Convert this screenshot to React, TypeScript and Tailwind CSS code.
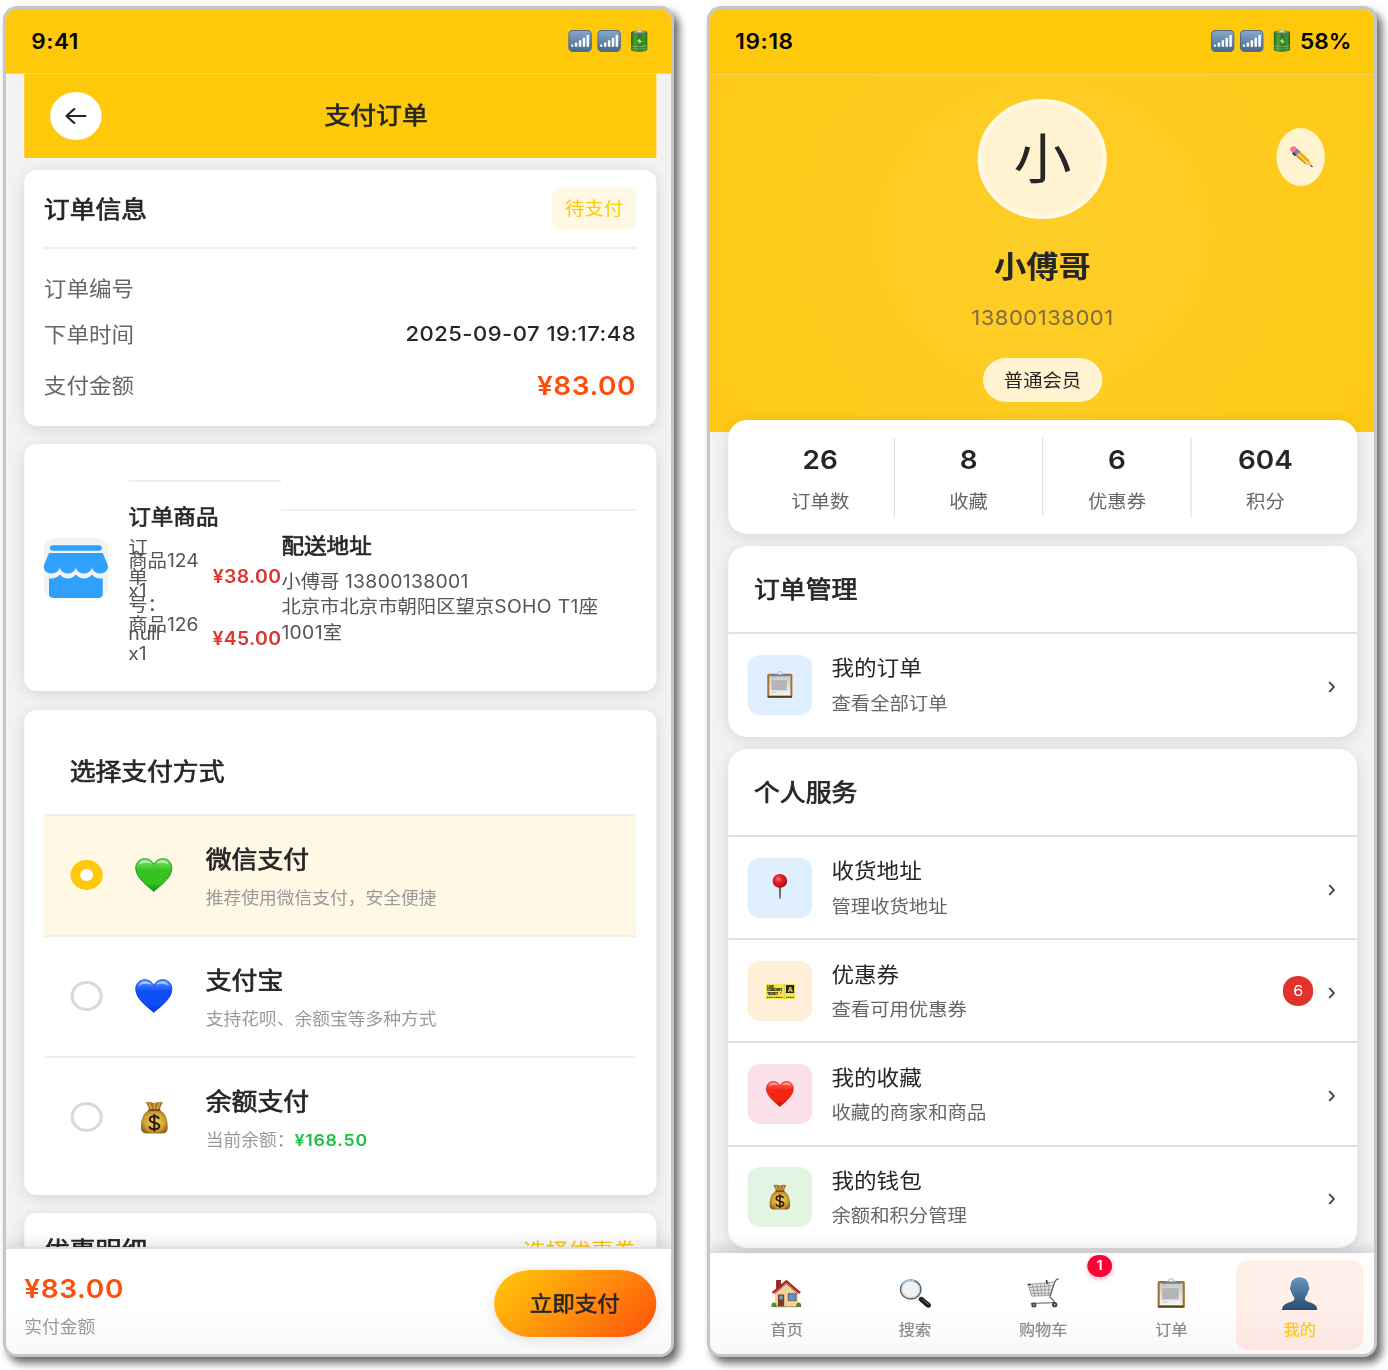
import React from "react";
import type { ReactNode } from "react";

type IconProps = { className?: string };

function Signal({ className = "" }: IconProps) {
  return (
    <svg viewBox="0 0 22 22" className={className}>
      <defs>
        <linearGradient id="sig" x1="0" y1="0" x2="0" y2="1">
          <stop offset="0" stopColor="#86a9cc" />
          <stop offset="1" stopColor="#486789" />
        </linearGradient>
      </defs>
      <rect x="0.5" y="0.5" width="21" height="21" rx="4" fill="url(#sig)" stroke="#526b86" />
      <g fill="#fff">
        <rect x="2.6" y="14.6" width="2.2" height="2.2" rx=".8" />
        <rect x="6.2" y="12.6" width="2.3" height="4.2" rx=".6" />
        <rect x="9.9" y="10.2" width="2.3" height="6.6" rx=".6" />
        <rect x="13.5" y="7.8" width="2.3" height="9" rx=".6" />
        <rect x="17.1" y="5" width="2.3" height="11.8" rx=".6" />
      </g>
    </svg>
  );
}

function Battery({ className = "" }: IconProps) {
  return (
    <svg viewBox="0 0 16 22" className={className}>
      <defs>
        <linearGradient id="bat" x1="0" x2="1" y1="0" y2="0">
          <stop offset="0" stopColor="#1c650e" />
          <stop offset=".25" stopColor="#4fa43a" />
          <stop offset=".5" stopColor="#2d7d1d" />
          <stop offset=".85" stopColor="#43932f" />
          <stop offset="1" stopColor="#1d5d11" />
        </linearGradient>
      </defs>
      <path d="M.4 2.6v16.8c0 1.4 3.4 2.3 7.6 2.3s7.6-.9 7.6-2.3V2.6z" fill="url(#bat)" />
      <ellipse cx="8" cy="2.4" rx="7.6" ry="1.9" fill="#57743f" />
      <ellipse cx="8" cy="1.9" rx="5.2" ry="1.3" fill="#8f9f96" />
      <ellipse cx="8" cy="1.2" rx="2.4" ry=".9" fill="#cfd6d4" />
      <path d="M.6 15.6c3 1.3 11.800 1.300 14.800 0" fill="none" stroke="#8cc47c" strokeWidth=".7" />
      <path d="M.6 18c3 1.300 11.800 1.300 14.800 0" fill="none" stroke="#7bb56b" strokeWidth=".6" />
      <path d="M9.200 8.200 5.800 11.300l2.300.5-.6 2.600 3.200-3.500-2.200-.5z" fill="#bfe0b4" />
    </svg>
  );
}

function Heart({ className = "", kind }: IconProps & { kind: "green" | "blue" | "red" }) {
  const c = {
    green: ["#7be36c", "#35c41f", "#0e8d12"],
    blue: ["#5a9bff", "#0f4ff5", "#0431e0"],
    red: ["#ff6a58", "#f32614", "#c40d05"],
  }[kind];
  return (
    <svg viewBox="0 0 36 34" preserveAspectRatio="none" className={className}>
      <defs>
        <linearGradient id={"h" + kind} x1="0" y1="0" x2="0" y2="1">
          <stop offset="0" stopColor={c[0]} />
          <stop offset=".35" stopColor={c[1]} />
          <stop offset=".75" stopColor={c[1]} />
          <stop offset="1" stopColor={c[2]} />
        </linearGradient>
      </defs>
      <path
        d="M18 33.500C15 30 1 21 .7 10.500.6 4.500 4.600.7 9.300.7c4 0 7.200 2.300 8.700 5.800C19.500 3 22.700.7 26.700.7c4.700 0 8.700 3.800 8.600 9.800C35 21 21 30 18 33.500z"
        fill={"url(#h" + kind + ")"}
        stroke={c[2]}
        strokeWidth=".8"
      />
      <path d="M3.500 7c.8-3 3-4.800 6-4.800 2.800 0 5.300 1.500 6.500 3.500-4-1.600-9-1.400-12.500 1.300z" fill="#fff" opacity=".5" />
      <path d="M20 5.700c1.200-2 3.700-3.500 6.500-3.500 3 0 5.200 1.800 6 4.800-3.500-2.700-8.500-2.900-12.500-1.300z" fill="#fff" opacity=".5" />
    </svg>
  );
}

function MoneyBag({ className = "" }: IconProps) {
  return (
    <svg viewBox="0 0 26 32" preserveAspectRatio="none" className={className}>
      <defs>
        <radialGradient id="bag" cx=".5" cy=".5" r=".6">
          <stop offset="0" stopColor="#f5d662" />
          <stop offset=".65" stopColor="#cf9f35" />
          <stop offset="1" stopColor="#805413" />
        </radialGradient>
      </defs>
      <path d="M5 .8c2 .9 3.500-.3 5 .4 2 .7 4 .7 6 0 1.500-.7 3 .5 5-.4L17.600 9H8.600z" fill="#a97626" />
      <path d="M8 2l2.600 6M13 2v6M18 2l-2.600 6" stroke="#e1b45b" strokeWidth="1" />
      <path d="M8.500 8.500C3.500 11 .6 16 .6 25c0 4.500 1.500 6.500 5.400 6.500h14c3.900 0 5.400-2 5.400-6.500C25.400 16 22.500 11 17.500 8.500z" fill="url(#bag)" />
      <path d="M8 8.700h10" stroke="#6d430f" strokeWidth="1.600" strokeLinecap="round" />
      <path d="M17.300 17.300c-.6-1.700-2.100-2.600-4.300-2.600-2.500 0-4.300 1.200-4.300 3.100 0 4.600 8.900 2 8.900 6.500 0 2-1.900 3.200-4.600 3.200-2.400 0-4.200-1-4.700-3M13 12.500v17" fill="none" stroke="#2a1d0c" strokeWidth="1.900" />
    </svg>
  );
}

function Clipboard({ className = "" }: IconProps) {
  return (
    <svg viewBox="0 0 27 30" preserveAspectRatio="none" className={className}>
      <defs>
        <linearGradient id="paper" x1="0" y1="0" x2="0" y2="1">
          <stop offset="0" stopColor="#c9c9c9" />
          <stop offset="1" stopColor="#f4f4f4" />
        </linearGradient>
      </defs>
      <rect x=".3" y="3" width="26.400" height="26.700" rx="1.800" fill="#a9732f" />
      <rect x=".6" y="27.800" width="25.800" height="1.800" rx=".9" fill="#5d3c15" />
      <rect x="2.500" y="5" width="22" height="22.200" fill="url(#paper)" />
      <rect x="4.800" y="10" width="16" height="11.500" fill="#b9b9b9" />
      <path d="M5 12h16M5 14.500h15.500M5 17h16M5 19.500h13M5 8h4M5 24h5" stroke="#a9a9a9" strokeWidth=".6" />
      <path d="M3.800 3.500h19.400v2.300H3.800z" fill="#76797e" />
      <path d="M9 3.800c2.500 0 1.800-3.200 4.500-3.200s2 3.200 4.500 3.200z" fill="#edf2f7" stroke="#8f9fb0" strokeWidth=".8" />
    </svg>
  );
}

function Pin({ className = "" }: IconProps) {
  return (
    <svg viewBox="0 0 14 25" preserveAspectRatio="none" className={className}>
      <defs>
        <radialGradient id="pin" cx=".4" cy=".35" r=".65">
          <stop offset="0" stopColor="#ff7a6e" />
          <stop offset=".4" stopColor="#e8202a" />
          <stop offset="1" stopColor="#ae0b16" />
        </radialGradient>
      </defs>
      <path d="M6 12h2.300l-.4 12.600h-1.500z" fill="#77665f" />
      <circle cx="7" cy="6.900" r="6.800" fill="url(#pin)" />
    </svg>
  );
}

function Ticket({ className = "" }: IconProps) {
  return (
    <svg viewBox="0 0 28 15" preserveAspectRatio="none" className={className}>
      <rect width="28" height="15" fill="#f4e64b" />
      <g fill="#26240f" className="font-['Inter'] font-black">
        <text x="1" y="3.700" fontSize="3.300" textLength="7">LIVE</text>
        <text x="1" y="7.200" fontSize="3.500" textLength="15">CONCERT</text>
        <text x="1" y="10.600" fontSize="3.500" textLength="11">TICKET</text>
      </g>
      <path d="M14 9.800l1-2.200" stroke="#55501c" strokeWidth=".7" />
      <path d="M1 13.300h6M8 13.300h8M19.500 13.300h7.500" stroke="#55501c" strokeWidth="1.200" strokeDasharray="1.200 .5" />
      <path d="M17.800 0v15" stroke="#b4a52e" strokeWidth=".7" strokeDasharray="1 1" />
      <rect x="19.400" y="1" width="7.800" height="8" fill="#24231a" />
      <text x="21" y="7.800" fontSize="6.500" fill="#f4e64b" className="font-['Inter'] font-bold">A</text>
    </svg>
  );
}

function House({ className = "" }: IconProps) {
  return (
    <svg viewBox="0 0 28 29" preserveAspectRatio="none" className={className}>
      <rect x="4.500" y="1" width="4.500" height="9" fill="#8e2a22" />
      <path d="M3.500 13 14 3.500 24.800 13v14.500H3.500z" fill="#eed2a2" />
      <path d="M1.200 14 14 2.200l12.800 11.800" fill="none" stroke="#b3201d" strokeWidth="2.200" />
      <path d="M3 14.800 14 4.500l11 10.300" fill="none" stroke="#6d1513" strokeWidth=".7" />
      <rect x="6.200" y="15.500" width="5.800" height="12.300" fill="#7b3d22" />
      <rect x="7.600" y="16.700" width="3" height="3.700" fill="#64a8d8" />
      <rect x="15.800" y="14.700" width="7.200" height="7" fill="#4f98d4" stroke="#875431" strokeWidth=".9" />
      <path d="M3 27.800h22" stroke="#a38b66" strokeWidth="1" />
      <path d="M0 28c-.2-3 1-4.500 2.500-4.500S5 25 5 28zM23 28c0-3 1-4.500 2.500-4.500s2.700 1.500 2.500 4.500z" fill="#4d8b26" />
    </svg>
  );
}

function Magnifier({ className = "" }: IconProps) {
  return (
    <svg viewBox="0 0 30 29" preserveAspectRatio="none" className={className}>
      <path d="m18.500 18.500 3.500 3" stroke="#8a8f95" strokeWidth="2.500" />
      <path d="m20.800 20.500 6.200 5.700" stroke="#1e2125" strokeWidth="5" strokeLinecap="round" />
      <path d="m22 20.500 5 4.700" stroke="#626972" strokeWidth="1" strokeLinecap="round" />
      <circle cx="10.700" cy="10.500" r="9.500" fill="#f1f2f3" stroke="#59626c" strokeWidth="1.300" />
      <path d="M2.500 6.500A9.400 9.400 0 0 1 14 1.700" fill="none" stroke="#a6cdee" strokeWidth="1.300" />
      <circle cx="10.700" cy="10.500" r="8.200" fill="none" stroke="#c3c8cc" strokeWidth=".9" />
    </svg>
  );
}

function Cart({ className = "" }: IconProps) {
  return (
    <svg viewBox="0 0 31 30" preserveAspectRatio="none" className={className} fill="none">
      <path d="M1 6.500 26.500 4l-3.800 13.500-18.200.7z" fill="#e4e4e4" />
      <path d="M1 6.500 26.500 4l-3.800 13.500-18.200.7zM2 9.500l23.700-1.800M3 12.500l21.700-1M3.800 15.500l20-.5M5 6.200 7.500 18M9 5.800 11 18M13 5.400l1.200 12.500M17 5l.3 12.800M21 4.500l-.7 13" stroke="#8d8b8b" strokeWidth=".75" />
      <path d="M30.500.8c-2.300.2-3.400 1.800-4 3.500l-4.800 14.500c1.500 2 4.800 3.500 4.300 5.500-2.500 1.200-16 .3-22.500 1.200" stroke="#69615e" strokeWidth="1.100" />
      <path d="M.5 6.500h3.200M18.500 2l1 4" stroke="#393737" strokeWidth="1.500" />
      <circle cx="6.500" cy="27" r="2.500" fill="#4a4644" />
      <circle cx="6.500" cy="27" r=".8" fill="#cfcfcf" />
      <circle cx="26.500" cy="26.700" r="2.600" fill="#4a3f3e" />
      <circle cx="26.500" cy="26.700" r=".8" fill="#cfcfcf" />
    </svg>
  );
}

function Person({ className = "" }: IconProps) {
  return (
    <svg viewBox="0 0 34 33" preserveAspectRatio="none" className={className}>
      <defs>
        <linearGradient id="per" x1="0" y1="0" x2="0" y2="1">
          <stop offset="0" stopColor="#6797c2" />
          <stop offset="1" stopColor="#2c4a70" />
        </linearGradient>
      </defs>
      <path d="M17 .3c5.300 0 8.600 3.600 8.600 8.800 0 .9.900 1.100.8 2.500-.1 1.600-1 1.800-1.300 3-.5 2.700-1.600 4.300-2.800 5.600-.5 1.800-.2 3 1.200 3.800 3.800 1.900 10.200 2.200 10.400 8.900H.1C.3 26.200 6.700 25.900 10.500 24c1.400-.8 1.700-2 1.200-3.800-1.200-1.300-2.300-2.900-2.800-5.600-.3-1.200-1.200-1.400-1.300-3-.1-1.400.8-1.600.8-2.500C8.400 3.900 11.700.3 17 .3z" fill="url(#per)" />
    </svg>
  );
}

function Pencil({ className = "" }: IconProps) {
  return (
    <svg viewBox="0 0 22 22" preserveAspectRatio="none" className={className}>
      <path d="m4.200 7.800 4-4.300 10.500 10.800-3.500 3.700z" fill="#f0a513" />
      <path d="m6 5.800 10.700 11" stroke="#ffd343" strokeWidth="1.700" />
      <path d="m4.200 7.800 11 10.200" stroke="#8a5508" strokeWidth=".7" />
      <path d="m15.200 18 3.500-3.700 2.900 6.700z" fill="#ecc58d" />
      <path d="m19.500 20.300 1.300-1.400 1.000 2.400z" fill="#20242b" />
      <path d="m3 6.600 4-4.200 3 3-4.300 4.200z" fill="#6c86bd" />
      <path d="M3 6.600 5.700 9.600" stroke="#333b55" strokeWidth="1.800" />
      <path d="M.6 4C.3 2.300 2.300.2 4 .3c1.300.1 2.300 1.200 3 2.100L3 6.600C2 5.800.8 5 .6 4z" fill="#ea7c8b" />
    </svg>
  );
}

function Shop({ className = "" }: IconProps) {
  return (
    <svg viewBox="0 0 60 60" preserveAspectRatio="none" className={className}>
      <rect width="60" height="60" rx="12" fill="#f2f2f2" />
      <rect x="5.800" y="7.300" width="48.400" height="5.400" rx="2.700" fill="#30a0ff" />
      <path d="M5 15h50l5 13c0 4.500-3 7.500-7.300 7.500-4.200 0-7.500-3-7.700-6.500-.2 3.500-3.300 6.500-7.500 6.500S30.200 32.500 30 29c-.2 3.500-3.300 6.500-7.500 6.500S15.200 32.500 15 29c-.2 3.500-3.500 6.500-7.700 6.500C3 35.500 0 32.500 0 28z" fill="#30a0ff" />
      <path d="M5 40.500c4.500.5 8-1 10.200-4 2 2.600 4.300 4 7.300 4s5.500-1.400 7.500-4c2 2.600 4.500 4 7.500 4s5.300-1.400 7.300-4c2.200 3 5.700 4.500 10.200 4V56c0 2.700-1.500 4-4 4H9c-2.500 0-4-1.300-4-4z" fill="#30a0ff" />
    </svg>
  );
}

function Chevron({ className = "" }: IconProps) {
  return (
    <svg viewBox="0 0 7 12" className={className} fill="none" stroke="#444" strokeWidth="1.900">
      <path d="M1 1l4.300 5L1 11" />
    </svg>
  );
}

/* Content is laid out in a 1.075x narrower space and widened to the frame. */
function Phone({ className, children }: { className: string; children: ReactNode }) {
  return (
    <section
      className={
        "h-[1351px] shrink-0 overflow-hidden rounded-[14px] border-[3px] border-[#c6c6c6] bg-[#f2f2f2] shadow-[5px_6px_9px_rgba(0,0,0,0.6)] " +
        className
      }
    >
      <div className="relative flex h-[1345px] w-[618.600px] origin-top-left scale-x-[1.075] flex-col">{children}</div>
    </section>
  );
}

const cardShadow = "shadow-[0_3px_14px_rgba(0,0,0,0.11)]";
/* A weight between regular and bold for Chinese headings. */
const heading = "font-normal [-webkit-text-stroke:0.7px_#262626]";

function Option({ icon, title, sub, active, className = "" }: { icon: ReactNode; title: string; sub: ReactNode; active?: boolean; className?: string }) {
  return (
    <div className={"flex items-center pl-[24.400px] " + (active ? "bg-[#fff8e5] " : "") + className}>
      {active ? (
        <span className="flex size-[30px] items-center justify-center rounded-full bg-[#fec90b]">
          <span className="size-3 rounded-full bg-white" />
        </span>
      ) : (
        <span className="size-[30px] rounded-full border-[3px] border-[#d9d9d9]" />
      )}
      <span className="ml-[18px] flex w-[60px] justify-center">{icon}</span>
      <div className="mt-[4px] ml-[18.300px] flex flex-col">
        <b className={"h-6 text-2xl leading-6 " + heading}>{title}</b>
        <span className="mt-[18px] h-[17px] text-[16.500px] leading-[17px] whitespace-nowrap text-[#999]">{sub}</span>
      </div>
    </div>
  );
}

function PayPhone() {
  return (
    <Phone className="w-[671px]">
      <div className="flex h-[65px] shrink-0 items-center justify-between border-b border-[#fbd654] bg-[#fec90b] pr-[22px] pl-[23.500px]">
        <span className="text-[21px] leading-none font-semibold tracking-[0.500px] text-black">9:41</span>
        <span className="-mt-px flex items-center">
          <Signal className="mr-[5px] size-[22px]" />
          <Signal className="mr-[9px] size-[22px]" />
          <Battery className="h-[22px] w-4" />
        </span>
      </div>
      <div className="flex h-[1173px] flex-col overflow-hidden pr-[14px] pl-[16.700px]">
        <div className="flex h-[84px] shrink-0 items-center bg-[#fec90b] pl-[24.300px]">
          <span className="flex size-12 items-center justify-center rounded-full bg-white">
            <svg viewBox="0 0 20 16" className="h-4 w-5" fill="none" stroke="#262626" strokeWidth="2" strokeLinecap="round" strokeLinejoin="round">
              <path d="M19 8H1.200M8.500 1 1.200 8l7.300 7" />
            </svg>
          </span>
          <h1 className={"flex-1 pr-[5px] text-center text-2xl leading-none " + heading}>支付订单</h1>
        </div>

        <div className={"mt-3 h-[256px] shrink-0 rounded-xl bg-white px-[18.500px] pt-[18px] " + cardShadow}>
          <div className="flex h-[61px] items-start justify-between border-b-2 border-[#efefef]">
            <h2 className={"pt-px text-2xl leading-[42px] " + heading}>订单信息</h2>
            <span className="flex h-[41px] w-[78px] items-center justify-center rounded-md bg-[#fff8e5] text-lg leading-none text-[#fec90b]">待支付</span>
          </div>
          <div className="mt-[18px] flex h-[42px] items-center text-[21px] leading-none text-[#666]">订单编号</div>
          <div className="mt-[4.500px] flex h-[42px] items-center justify-between text-[21px] leading-none text-[#666]">
            下单时间<span className="text-[20.500px] font-medium tracking-[0.450px] text-[#262626]">2025-09-07 19:17:48</span>
          </div>
          <div className="mt-[8.500px] flex h-[42px] items-center justify-between text-[21px] leading-none text-[#666]">
            支付金额<span className="pt-px text-[26px] font-semibold tracking-[0.500px] text-[#ff4d0a]">¥83.00</span>
          </div>
        </div>

        <div className={"mt-[18px] flex h-[247px] shrink-0 rounded-xl bg-white pl-[18.500px] " + cardShadow}>
          <Shop className="mt-[94px] mr-[18.500px] size-[60px] shrink-0" />
          <div className="relative mt-[36px] h-[190px] w-[142.500px] border-t-2 border-[#f0f0f0]">
            <h3 className={"mt-[24px] text-[21px] leading-[22px] " + heading}>订单商品</h3>
            <p className="absolute top-[52px] left-0 w-[36px] text-lg leading-[28.700px] text-[#555]">
              订
              <br />
              单
              <br />
              号：
              <br />
              null
            </p>
            <div className="mt-[17.500px] flex items-center justify-between">
              <p className="w-[72px] text-lg leading-[30px] text-[#555]">商品124<br />x1</p>
              <span className="pt-[2px] text-lg font-semibold tracking-[0.350px] text-[#e1322c]">¥38.00</span>
            </div>
            <div className="mt-[4px] flex items-center justify-between">
              <p className="w-[72px] text-lg leading-[29.500px] text-[#555]">商品126<br />x1</p>
              <span className="text-lg font-semibold tracking-[0.350px] text-[#e1322c]">¥45.00</span>
            </div>
          </div>
          <div className="mt-[65px] h-[150px] w-[331px] border-t-2 border-[#f0f0f0]">
            <h3 className={"mt-[23.500px] text-[21px] leading-[22px] " + heading}>配送地址</h3>
            <p className="mt-[12px] text-lg leading-[25.500px] whitespace-nowrap text-[#555]">
              小傅哥 <span className="tracking-[0.300px]">13800138001</span>
              <br />
              北京市北京市朝阳区望京<span className="tracking-[0.300px]">SOHO T1</span>座
              <br />
              <span className="tracking-[0.300px]">1001</span>室
            </p>
          </div>
        </div>

        <div className={"mt-[18.500px] h-[485.500px] shrink-0 rounded-xl bg-white px-[18.500px] " + cardShadow}>
          <h2 className={"h-[106px] border-b-2 border-[#efefef] pt-[50px] pl-6 text-2xl leading-6 " + heading}>选择支付方式</h2>
          <Option active className="h-[121.500px] border-b-2 border-[#efefef]" icon={<Heart kind="green" className="h-[34px] w-[35px]" />} title="微信支付" sub="推荐使用微信支付，安全便捷" />
          <Option className="h-[120.500px] border-b-2 border-[#efefef]" icon={<Heart kind="blue" className="h-[34px] w-[35px]" />} title="支付宝" sub="支持花呗、余额宝等多种方式" />
          <Option
            className="h-[119px]"
            icon={<MoneyBag className="h-[33px] w-[26px]" />}
            title="余额支付"
            sub={
              <>
                当前余额：<span className="font-semibold tracking-[0.700px] text-[#1fbf45]">¥168.50</span>
              </>
            }
          />
        </div>

        <div className={"mt-[18px] flex h-[100px] shrink-0 justify-between rounded-xl bg-white px-[18.500px] pt-[26px] " + cardShadow}>
          <h2 className={"text-2xl leading-6 " + heading}>优惠明细</h2>
          <span className="text-[21px] leading-6 text-[#fec90b]">选择优惠券</span>
        </div>
      </div>
      <div className="relative flex h-[107px] shrink-0 items-center justify-between border-t-2 border-[#dedede] bg-linear-to-b from-white from-55% to-[#f8f8f8] pr-[14px] pl-[17px] shadow-[0_-3px_14px_rgba(0,0,0,0.13)]">
        <div className="pt-[7px]">
          <div className="text-[26px] leading-[30px] font-semibold tracking-[0.600px] text-[#ff4d0a]">¥83.00</div>
          <div className="mt-[13px] text-[16.500px] leading-[20px] text-[#999]">实付金额</div>
        </div>
        <button className="mt-[4px] h-[67px] w-[151px] rounded-[36px] bg-linear-135 from-[#ffc80a] to-[#ff4a0a] text-[21px] leading-none font-normal shadow-[0_2px_12px_rgba(0,0,0,0.12)] [-webkit-text-stroke:0.600px_#262626]">立即支付</button>
      </div>
    </Phone>
  );
}

function Stat({ value, label, last }: { value: string; label: string; last?: boolean }) {
  return (
    <div className={"flex h-[79px] flex-1 flex-col items-center " + (last ? "" : "border-r-[1.500px] border-[#dcdcdc]")}>
      <b className="mt-[8px] text-[26px] leading-[28px] font-semibold">{value}</b>
      <span className="mt-[19.500px] text-lg leading-[18px] text-[#666]">{label}</span>
    </div>
  );
}

function Row({ tint, icon, title, sub, badge, last }: { tint: string; icon: ReactNode; title: string; sub: string; badge?: string; last?: boolean }) {
  return (
    <div className={"flex h-[103.200px] items-center border-b-2 pr-[20px] pl-[18px] " + (last ? "border-transparent" : "border-[#e0e0e0]")}>
      <span className={"flex size-[60px] items-center justify-center rounded-xl " + tint}>{icon}</span>
      <div className="mt-[1px] ml-[18px] flex-1">
        <div className="text-[21px] leading-[22px]">{title}</div>
        <div className="mt-[15.500px] text-lg leading-[18px] text-[#666]">{sub}</div>
      </div>
      {badge && <span className="mr-[14px] flex h-[30px] w-7 items-center justify-center rounded-full bg-[#e1322c] text-[15px] leading-none text-white">{badge}</span>}
      <Chevron className="mt-[4px] h-3 w-[7px]" />
    </div>
  );
}

function CardTitle({ children }: { children: ReactNode }) {
  return <h2 className={"h-[88px] border-b-2 border-[#e0e0e0] pt-[32px] pl-6 text-2xl leading-6 " + heading}>{children}</h2>;
}

function Tab({ icon, label, active, badge }: { icon: ReactNode; label: string; active?: boolean; badge?: string }) {
  return (
    <div className={"relative flex h-[90px] w-[119.300px] flex-col items-center rounded-xl " + (active ? "bg-linear-to-b from-[#fff0e9] from-50% to-[#fbe6e0] text-[#fec90b]" : "text-[#888]")}>
      <span className="mt-[16px] flex h-[34px] items-center">{icon}</span>
      <span className="mt-[11.500px] text-[15px] leading-4 [-webkit-text-stroke:0.200px_currentColor]">{label}</span>
      {badge && (
        <span className="absolute -top-[5px] left-[100.500px] flex h-[22px] w-[23px] items-center justify-center rounded-full bg-[#ff0036] text-[13.500px] leading-none font-semibold text-white shadow-[0_2px_5px_rgba(255,0,54,0.3)]">
          {badge}
        </span>
      )}
    </div>
  );
}

function ProfilePhone() {
  return (
    <Phone className="w-[670px]">
      <div className="flex h-[66px] shrink-0 items-center justify-between border-b border-[#fbd654] bg-[#fec90b] pr-[22px] pl-[23.500px]">
        <span className="text-[21px] leading-none font-semibold tracking-[0.600px] text-black">19:18</span>
        <span className="flex items-center">
          <Signal className="-mt-[2px] mr-[5px] size-[22px]" />
          <Signal className="-mt-[2px] mr-[9px] size-[22px]" />
          <Battery className="-mt-[2px] mr-[9px] h-[22px] w-4" />
          <span className="text-[21px] leading-none font-semibold text-black">58%</span>
        </span>
      </div>
      <div className="relative flex h-[357px] shrink-0 flex-col items-center bg-[radial-gradient(circle_at_50%_45%,#fecd28_0%,#fecc20_50%,#fec915_100%)]">
        <span className="mt-[23.500px] flex size-[120px] items-center justify-center rounded-full border-[4.500px] border-[#fff8e4] bg-[#fff3d2] pt-[3px] text-[54px] leading-none">小</span>
        <h1 className="mt-[31px] text-[30px] leading-8 font-semibold">小傅哥</h1>
        <p className="mt-[24.500px] text-[20.500px] leading-6 tracking-[0.450px] text-[#7d6c40]">13800138001</p>
        <span className="mt-[28px] flex h-[44px] w-[111px] items-center justify-center rounded-full border-[1.500px] border-[#fff6dc] bg-[#fff3d2] pt-[2px] text-lg leading-none">普通会员</span>
        <button className="absolute top-[53px] left-[527px] flex h-[58px] w-[45px] items-center justify-center rounded-[50%] bg-[#fff4cf]">
          <Pencil className="size-[22px]" />
        </button>
      </div>
      <div className="relative -mt-[12px] flex flex-col pr-[16.400px] pl-[17px]">
        <div className={"flex h-[114px] rounded-[18px] bg-white px-[17px] pt-[17.500px] " + cardShadow}>
          <Stat value="26" label="订单数" />
          <Stat value="8" label="收藏" />
          <Stat value="6" label="优惠券" />
          <Stat value="604" label="积分" last />
        </div>
        <div className={"mt-3 h-[191px] rounded-[18px] bg-white " + cardShadow}>
          <CardTitle>订单管理</CardTitle>
          <Row last tint="bg-[#dfeffe]" icon={<Clipboard className="h-[27px] w-6" />} title="我的订单" sub="查看全部订单" />
        </div>
        <div className={"mt-3 h-[499px] rounded-[18px] bg-white " + cardShadow}>
          <CardTitle>个人服务</CardTitle>
          <Row tint="bg-[#dfeffe]" icon={<Pin className="mt-[-2px] h-[25px] w-[14px]" />} title="收货地址" sub="管理收货地址" />
          <Row tint="bg-[#ffefd9]" icon={<Ticket className="mt-[2px] h-[15px] w-[27px]" />} title="优惠券" sub="查看可用优惠券" badge="6" />
          <Row tint="bg-[#fbdfe9]" icon={<Heart kind="red" className="h-[26px] w-[26px]" />} title="我的收藏" sub="收藏的商家和商品" />
          <Row last tint="bg-[#e2f5e2]" icon={<MoneyBag className="h-[26px] w-[20px]" />} title="我的钱包" sub="余额和积分管理" />
        </div>
      </div>
      <div className="absolute inset-x-0 bottom-0 flex h-[101px] bg-linear-to-b from-white from-55% to-[#f8f8f8] pt-[7px] pl-[11.700px] shadow-[0_-3px_14px_rgba(0,0,0,0.18)]">
        <Tab icon={<House className="h-[29px] w-[28px]" />} label="首页" />
        <Tab icon={<Magnifier className="h-[29px] w-[30px]" />} label="搜索" />
        <Tab icon={<Cart className="h-[30px] w-[30px]" />} label="购物车" badge="1" />
        <Tab icon={<Clipboard className="h-[30px] w-[26px]" />} label="订单" />
        <Tab active icon={<Person className="h-[33px] w-[33px]" />} label="我的" />
      </div>
    </Phone>
  );
}

export default function App() {
  return (
    <main className="flex h-[1370px] w-[1388px] gap-[33px] overflow-hidden bg-white pt-[6px] pl-[3px] font-['Inter','Noto_Sans_CJK_SC',sans-serif] text-[#262626]">
      <PayPhone />
      <ProfilePhone />
    </main>
  );
}
